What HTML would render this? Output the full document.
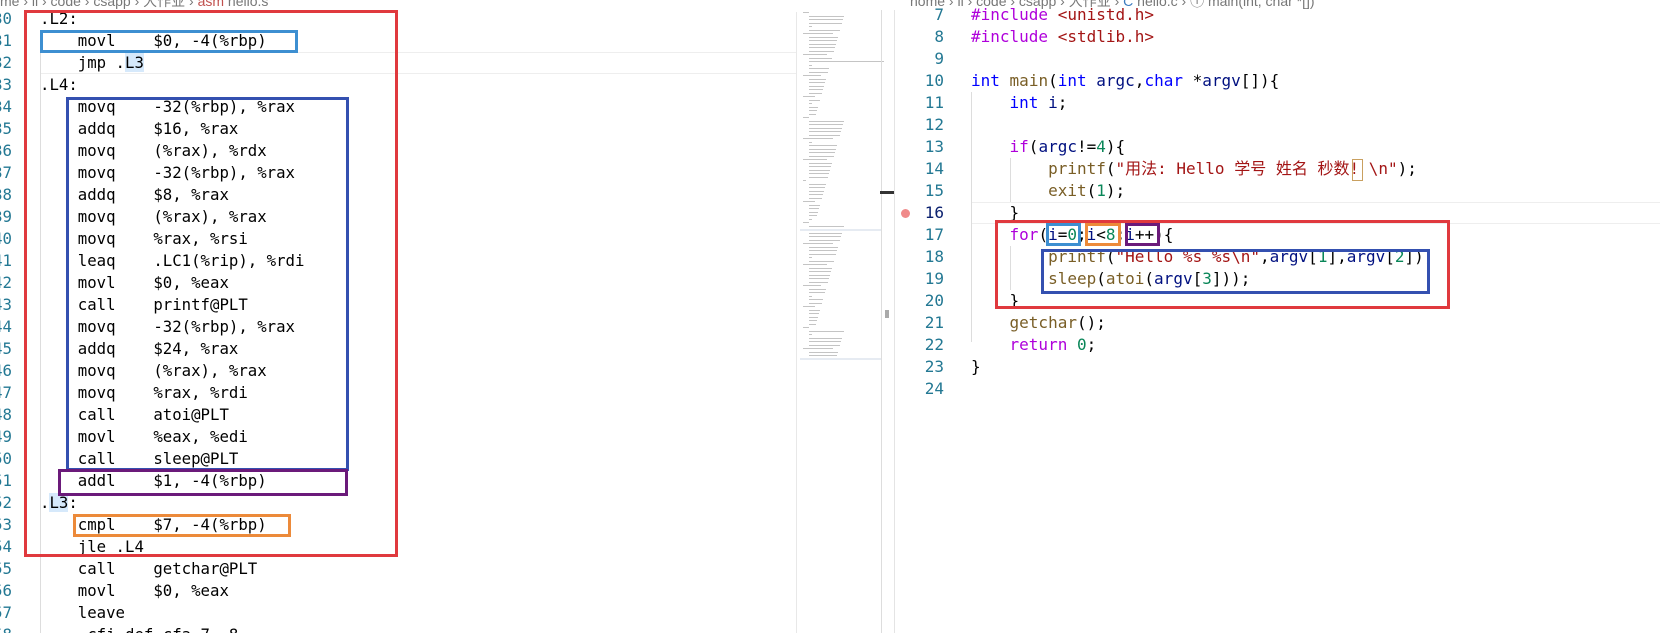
<!DOCTYPE html>
<html><head><meta charset="utf-8"><style>
html,body{margin:0;padding:0;width:1660px;height:633px;overflow:hidden;background:#fff;position:relative}
.c{position:absolute;white-space:pre;font-family:"DejaVu Sans Mono","Liberation Mono","Noto Sans CJK SC",monospace;height:22px;line-height:22px;color:#000}
.L{font-size:15.7px}
.R{font-size:16px}
.n{color:#237893;text-align:right}
.box{position:absolute;box-sizing:border-box}
.k{color:#0000ff}.p{color:#af00db}.s{color:#a31515}.f{color:#795e26}.d{color:#098658}.v{color:#001080}
.mm{position:absolute;height:1px;background:#c4c4c4}
.bc{position:absolute;top:-9px;font-family:"Liberation Sans","Noto Sans CJK SC",sans-serif;font-size:14px;color:#777;white-space:pre}
</style></head><body>
<div class="bc" style="left:0">me › ll › code › csapp › 大作业 › <span style="color:#c0504d">asm</span> hello.s</div>
<div class="bc" style="left:910px">home › ll › code › csapp › 大作业 › <span style="color:#3b7bbf">C</span> hello.c › ⓘ main(int, char *[])</div>

<div class="box" style="left:40px;top:52px;width:756px;height:22px;border-top:1px solid #eee;border-bottom:1px solid #eee"></div>
<div class="box" style="left:40px;top:52px;width:1px;height:590px;background:#ddd"></div>
<div class="box" style="left:796px;top:12px;width:1px;height:621px;background:#e8e8e8"></div>

<div id="left"></div>
<div id="right"></div>

<div id="mm"></div>
<div class="box" style="left:800px;top:229px;width:81px;height:2px;background:#e6ebf2"></div>
<div class="box" style="left:800px;top:358px;width:81px;height:2px;background:#e6ebf2"></div>
<div class="box" style="left:881px;top:10px;width:1px;height:623px;background:#ddd"></div>
<div class="box" style="left:894px;top:10px;width:1px;height:623px;background:#e4e4e4"></div>
<div class="box" style="left:880px;top:191px;width:14px;height:3px;background:#333"></div>
<div class="box" style="left:885px;top:310px;width:4px;height:8px;background:#aaa"></div>
<div class="box" style="left:901px;top:209px;width:9px;height:9px;border-radius:50%;background:#f08a8a"></div>

<div class="box" style="left:971px;top:202px;width:689px;height:22px;border-top:1px solid #eee;border-bottom:1px solid #eee"></div>
<div class="box" style="left:971px;top:92px;width:1px;height:250px;background:#ddd"></div>
<div class="box" style="left:1010px;top:158px;width:1px;height:44px;background:#ddd"></div>
<div class="box" style="left:1010px;top:246px;width:1px;height:44px;background:#ddd"></div>

<div class="box" style="left:24px;top:10px;width:374px;height:547px;border:3px solid #e0393e"></div>
<div class="box" style="left:40px;top:30px;width:258px;height:23px;border:3px solid #3d8fd1"></div>
<div class="box" style="left:66px;top:97px;width:283px;height:374px;border:3px solid #3450b0"></div>
<div class="box" style="left:58px;top:469px;width:290px;height:27px;border:3px solid #6b1a7a"></div>
<div class="box" style="left:73px;top:514px;width:218px;height:23px;border:3px solid #ec8a3a"></div>
<div class="box" style="left:995px;top:220px;width:455px;height:89px;border:3px solid #e0393e"></div>
<div class="box" style="left:1041px;top:249px;width:389px;height:45px;border:3px solid #3450b0"></div>
<div class="box" style="left:1046px;top:223px;width:35px;height:23px;border:3px solid #3d8fd1"></div>
<div class="box" style="left:1085px;top:223px;width:36px;height:23px;border:3px solid #ec8a3a"></div>
<div class="box" style="left:1125px;top:223px;width:35px;height:23px;border:3px solid #6b1a7a"></div>
<div class="box" style="left:1352px;top:159px;width:11px;height:22px;border:1px solid #c9a060"></div>

<script>
var L=[".L2:","    movl    $0, -4(%rbp)","    jmp .<span style='background:#d6e9fb'>L3</span>",".L4:",
"    movq    -32(%rbp), %rax","    addq    $16, %rax","    movq    (%rax), %rdx","    movq    -32(%rbp), %rax",
"    addq    $8, %rax","    movq    (%rax), %rax","    movq    %rax, %rsi","    leaq    .LC1(%rip), %rdi",
"    movl    $0, %eax","    call    printf@PLT","    movq    -32(%rbp), %rax","    addq    $24, %rax",
"    movq    (%rax), %rax","    movq    %rax, %rdi","    call    atoi@PLT","    movl    %eax, %edi",
"    call    sleep@PLT","    addl    $1, -4(%rbp)",".<span style='background:#d6e9fb'>L3</span>:","    cmpl    $7, -4(%rbp)",
"    jle .L4","    call    getchar@PLT","    movl    $0, %eax","    leave","    .cfi_def_cfa 7, 8"];
var h="";
for(var i=0;i<L.length;i++){var y=8+22*i;
h+='<div class="c L n" style="left:-24px;top:'+y+'px;width:36px">'+(30+i)+'</div>';
h+='<div class="c L" style="left:40px;top:'+y+'px">'+L[i]+'</div>';}
document.getElementById('left').outerHTML=h;
var R=['<span class="p">#include</span> <span class="s">&lt;unistd.h&gt;</span>',
'<span class="p">#include</span> <span class="s">&lt;stdlib.h&gt;</span>','',
'<span class="k">int</span> <span class="f">main</span>(<span class="k">int</span> <span class="v">argc</span>,<span class="k">char</span> *<span class="v">argv</span>[]){',
'    <span class="k">int</span> <span class="v">i</span>;','',
'    <span class="p">if</span>(<span class="v">argc</span>!=<span class="d">4</span>){',
'        <span class="f">printf</span>(<span class="s">"用法: Hello 学号 姓名 秒数! \\n"</span>);',
'        <span class="f">exit</span>(<span class="d">1</span>);','    }',
'    <span class="p">for</span>(<span class="v">i</span>=<span class="d">0</span>;<span class="v">i</span>&lt;<span class="d">8</span>;<span class="v">i</span>++){',
'        <span class="f">printf</span>(<span class="s">"Hello %s %s\\n"</span>,<span class="v">argv</span>[<span class="d">1</span>],<span class="v">argv</span>[<span class="d">2</span>]);',
'        <span class="f">sleep</span>(<span class="f">atoi</span>(<span class="v">argv</span>[<span class="d">3</span>]));','    }',
'    <span class="f">getchar</span>();','    <span class="p">return</span> <span class="d">0</span>;','}',''];
h="";
for(var j=0;j<R.length;j++){var y=4+22*j;var n=7+j;
h+='<div class="c R n" style="left:904px;top:'+y+'px;width:40px;'+(n==16?'color:#0b216f':'')+'">'+n+'</div>';
h+='<div class="c R" style="left:971px;top:'+y+'px">'+R[j]+'</div>';}
document.getElementById('right').outerHTML=h;
var m="";
for(var k=0;k<100;k++){var w=(k*29%30)+6;if(k==14)w=75;if(k%11==4)w=3;
m+='<div class="mm" style="left:'+(803+(k%6==0?0:6))+'px;top:'+(12+k*3.5)+'px;width:'+w+'px"></div>';}
document.getElementById('mm').outerHTML=m;
</script>
</body></html>
